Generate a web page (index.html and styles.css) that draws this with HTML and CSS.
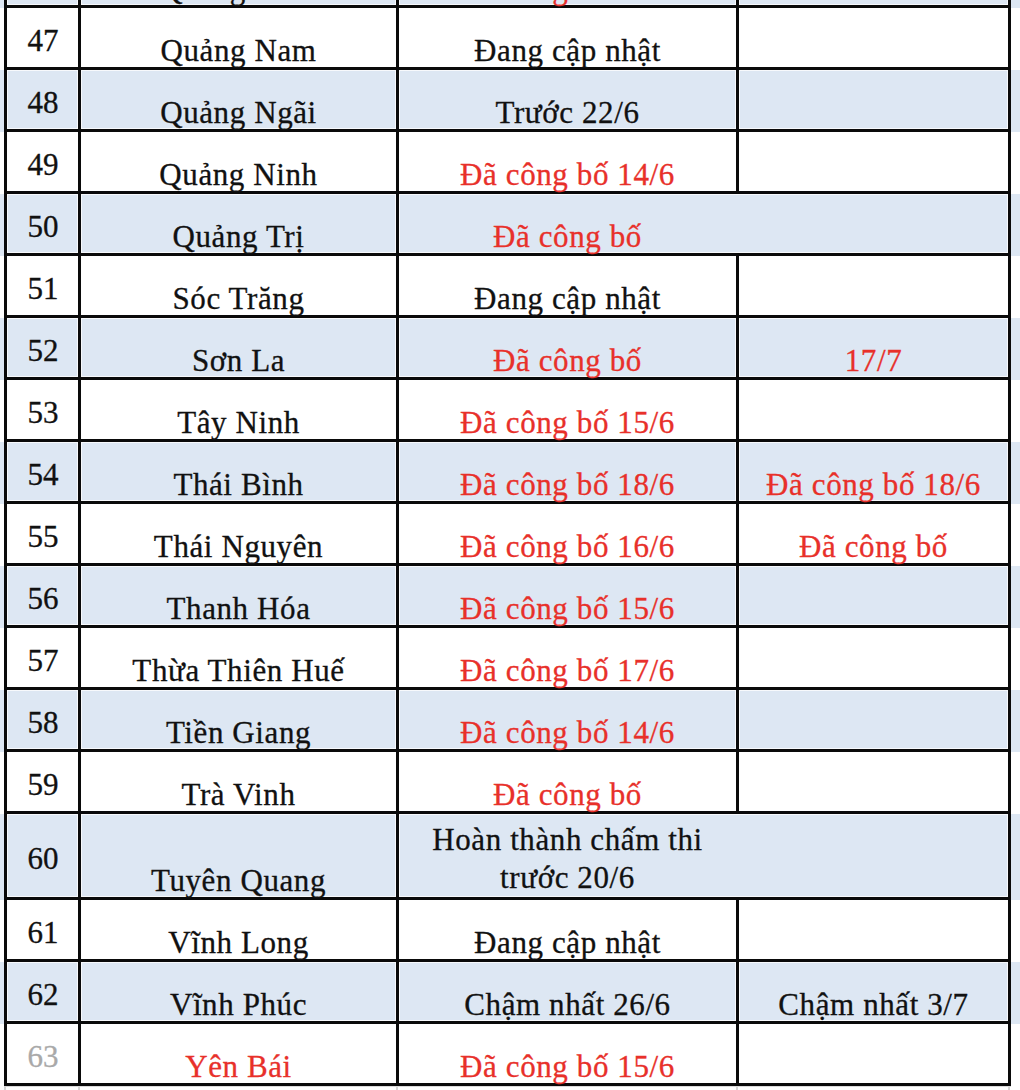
FILE: index.html
```html
<!DOCTYPE html>
<html lang="vi">
<head>
<meta charset="utf-8">
<title>Lịch công bố điểm thi</title>
<link rel="stylesheet" href="styles.css">
</head>
<body>
<div class="sheet">
  <div class="row alt"><div class="grid">
    <div class="cell num">46</div><div class="cell name">Quảng Bình</div><div class="cell c3 red">Đã công bố 17/6</div><div class="cell c4"></div>
  </div></div>
  <div class="row"><div class="grid">
    <div class="cell num">47</div><div class="cell name">Quảng Nam</div><div class="cell c3">Đang cập nhật</div><div class="cell c4"></div>
  </div></div>
  <div class="row alt"><div class="grid">
    <div class="cell num">48</div><div class="cell name">Quảng Ngãi</div><div class="cell c3">Trước 22/6</div><div class="cell c4"></div>
  </div></div>
  <div class="row"><div class="grid">
    <div class="cell num">49</div><div class="cell name">Quảng Ninh</div><div class="cell c3 red">Đã công bố 14/6</div><div class="cell c4"></div>
  </div></div>
  <div class="row alt"><div class="grid">
    <div class="cell num">50</div><div class="cell name">Quảng Trị</div><div class="cell c3 merged red"><span class="inner">Đã công bố</span></div>
  </div></div>
  <div class="row"><div class="grid">
    <div class="cell num">51</div><div class="cell name">Sóc Trăng</div><div class="cell c3">Đang cập nhật</div><div class="cell c4"></div>
  </div></div>
  <div class="row alt"><div class="grid">
    <div class="cell num">52</div><div class="cell name">Sơn La</div><div class="cell c3 red">Đã công bố</div><div class="cell c4 red">17/7</div>
  </div></div>
  <div class="row"><div class="grid">
    <div class="cell num">53</div><div class="cell name">Tây Ninh</div><div class="cell c3 red">Đã công bố 15/6</div><div class="cell c4"></div>
  </div></div>
  <div class="row alt"><div class="grid">
    <div class="cell num">54</div><div class="cell name">Thái Bình</div><div class="cell c3 red">Đã công bố 18/6</div><div class="cell c4 red">Đã công bố 18/6</div>
  </div></div>
  <div class="row"><div class="grid">
    <div class="cell num">55</div><div class="cell name">Thái Nguyên</div><div class="cell c3 red">Đã công bố 16/6</div><div class="cell c4 red">Đã công bố</div>
  </div></div>
  <div class="row alt"><div class="grid">
    <div class="cell num">56</div><div class="cell name">Thanh Hóa</div><div class="cell c3 red">Đã công bố 15/6</div><div class="cell c4"></div>
  </div></div>
  <div class="row"><div class="grid">
    <div class="cell num">57</div><div class="cell name">Thừa Thiên Huế</div><div class="cell c3 red">Đã công bố 17/6</div><div class="cell c4"></div>
  </div></div>
  <div class="row alt"><div class="grid">
    <div class="cell num">58</div><div class="cell name">Tiền Giang</div><div class="cell c3 red">Đã công bố 14/6</div><div class="cell c4"></div>
  </div></div>
  <div class="row"><div class="grid">
    <div class="cell num">59</div><div class="cell name">Trà Vinh</div><div class="cell c3 red">Đã công bố</div><div class="cell c4"></div>
  </div></div>
  <div class="row alt tall"><div class="grid">
    <div class="cell num">60</div><div class="cell name">Tuyên Quang</div><div class="cell c3 merged"><span class="inner">Hoàn thành chấm thi trước 20/6</span></div>
  </div></div>
  <div class="row"><div class="grid">
    <div class="cell num">61</div><div class="cell name">Vĩnh Long</div><div class="cell c3">Đang cập nhật</div><div class="cell c4"></div>
  </div></div>
  <div class="row alt"><div class="grid">
    <div class="cell num">62</div><div class="cell name">Vĩnh Phúc</div><div class="cell c3">Chậm nhất 26/6</div><div class="cell c4">Chậm nhất 3/7</div>
  </div></div>
  <div class="row"><div class="grid">
    <div class="cell num faded">63</div><div class="cell name red">Yên Bái</div><div class="cell c3 red">Đã công bố 15/6</div><div class="cell c4"></div>
  </div></div>
  <div class="row tail"><div class="grid">
    <div class="cell num"></div><div class="cell name"></div><div class="cell c3"></div><div class="cell c4"></div>
  </div></div>
</div>
</body>
</html>
```

FILE: styles.css
```css
html, body {
  margin: 0;
  padding: 0;
  background: #ffffff;
}

body {
  width: 1020px;
  height: 1090px;
  overflow: hidden;
  font-family: "Liberation Serif", "Times New Roman", serif;
  color: #111111;
}

.sheet {
  margin-top: -54px;
}

.row {
  background: #ffffff;
  padding-left: 4px;
}

.row.alt {
  background: #dde7f3;
}

.grid {
  display: flex;
  width: 1007px;
  height: 62px;
  box-sizing: border-box;
  border-left: 3px solid #0a0a0a;
  border-bottom: 3px solid #0a0a0a;
}

.row.tall .grid {
  height: 86px;
}

.cell {
  box-sizing: border-box;
  height: 100%;
  border-right: 3px solid #0a0a0a;
  display: flex;
  justify-content: center;
  align-items: flex-end;
  text-align: center;
  font-size: 31px;
  line-height: 33px;
  letter-spacing: 0.6px;
  white-space: nowrap;
  -webkit-text-stroke: 0.3px currentColor;
}

.row.alt .cell {
  box-shadow: inset 0 0 0 1px rgba(255, 255, 255, 0.75);
}

.num {
  width: 74px;
  align-items: center;
  letter-spacing: 0;
  padding-top: 6px;
  padding-left: 1px;
}

.name {
  width: 318px;
}

.c3 {
  width: 340px;
}

.c4 {
  width: 272px;
}

.c3.merged {
  width: 612px;
  padding-right: 272px;
  white-space: normal;
}

.inner {
  display: block;
  width: 337px;
}

.row.tall .inner {
  padding: 0 20px;
  box-sizing: border-box;
  line-height: 38px;
}

.red {
  color: #e8302a;
}

.faded {
  color: #a9a9a9;
}

.row.tail .grid {
  height: 10px;
  border-left: 2px solid #d6d6d6;
  border-bottom: none;
  border-top: 1px solid #dadada;
}

.row.tail .cell {
  border-right: 2px solid #d6d6d6;
}
```
